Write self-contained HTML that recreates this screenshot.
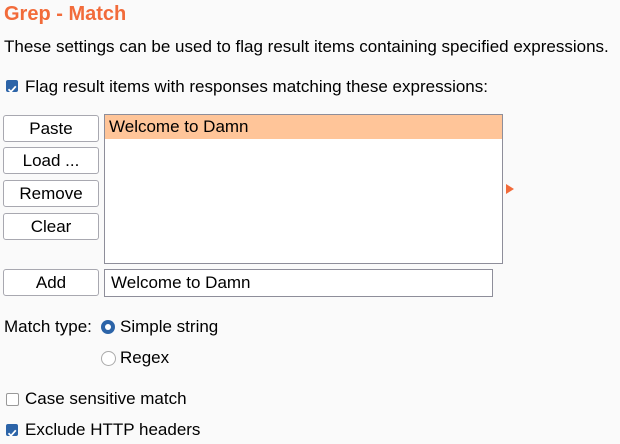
<!DOCTYPE html>
<html><head><style>
body{margin:0;width:620px;height:444px;background:#fafafa;font-family:"Liberation Sans",sans-serif;font-size:17px;color:#000;position:relative;overflow:hidden}
.a{position:absolute;white-space:nowrap}
.btn{position:absolute;left:3px;width:94px;height:25px;border:1px solid #a8a8b0;border-radius:3px;background:#fff;text-align:center;line-height:25px;box-sizing:content-box}
.cb{position:absolute;width:12px;height:12px;border-radius:2px}
.cb.on{background:#2c64a8}
.cb.off{border:1px solid #999;background:#fff;width:11px;height:11px}
</style></head><body>
<div class="a" style="left:4px;top:3px;font-size:20px;font-weight:bold;color:#f26b3a">Grep - Match</div>
<div class="a" style="left:4px;top:37px">These settings can be used to flag result items containing specified expressions.</div>
<div class="cb on" style="left:6px;top:80px"><svg width="12" height="12"><path d="M2.5 6.2 L5 8.7 L9.8 3.3" stroke="#fff" stroke-width="1.8" fill="none"/></svg></div>
<div class="a" style="left:25px;top:77px">Flag result items with responses matching these expressions:</div>
<div class="btn" style="top:115px">Paste</div>
<div class="btn" style="top:147px">Load ...</div>
<div class="btn" style="top:180px">Remove</div>
<div class="btn" style="top:213px">Clear</div>
<div class="a" style="left:104px;top:114px;width:397px;height:148px;border:1px solid #8e8e9a;background:#fff"></div>
<div class="a" style="left:105px;top:115px;width:397px;height:24px;background:#ffc599"></div>
<div class="a" style="left:109px;top:117px">Welcome to Damn</div>
<svg class="a" style="left:506px;top:184px" width="8" height="10"><path d="M0 0 L8 5 L0 10Z" fill="#f26b3a"/></svg>
<div class="btn" style="top:269px">Add</div>
<div class="a" style="left:104px;top:269px;width:387px;height:26px;border:1px solid #8e8e9a;background:#fff"></div>
<div class="a" style="left:111px;top:273px">Welcome to Damn</div>
<div class="a" style="left:4px;top:317px">Match type:</div>
<div class="a" style="left:101px;top:320px;width:14px;height:14px;border-radius:50%;background:#2c64a8"><div style="position:absolute;left:4px;top:4px;width:6px;height:6px;border-radius:50%;background:#fff"></div></div>
<div class="a" style="left:120px;top:317px">Simple string</div>
<div class="a" style="left:101px;top:351px;width:13px;height:13px;border-radius:50%;border:1px solid #aaa;background:#fff"></div>
<div class="a" style="left:120px;top:348px">Regex</div>
<div class="cb off" style="left:6px;top:393px"></div>
<div class="a" style="left:25px;top:389px">Case sensitive match</div>
<div class="cb on" style="left:6px;top:424px"><svg width="12" height="12"><path d="M2.5 6.2 L5 8.7 L9.8 3.3" stroke="#fff" stroke-width="1.8" fill="none"/></svg></div>
<div class="a" style="left:25px;top:420px">Exclude HTTP headers</div>
</body></html>
